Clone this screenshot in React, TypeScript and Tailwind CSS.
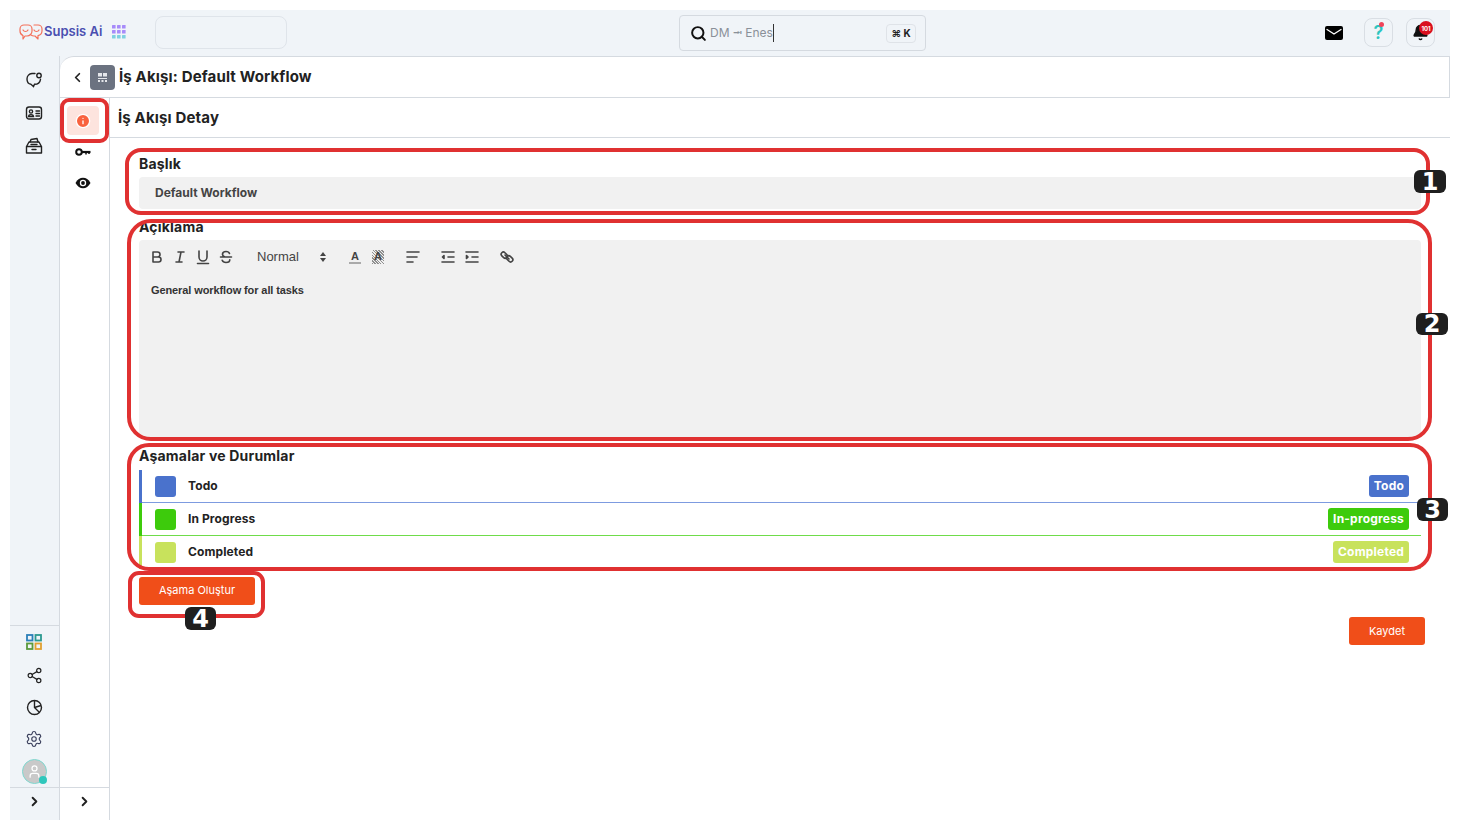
import React from 'react';
import { ChevronLeft, ChevronRight, Search, Info, Settings, Share2, Bell, User } from 'lucide-react';

const stages = [
  { name: 'Todo', tag: 'Todo', bar: 'border-l-[#4a72cc]', line: 'bg-[#7d9be0]', bg: 'bg-[#4a72cc]' },
  { name: 'In Progress', tag: 'In-progress', bar: 'border-l-[#3dcb0c]', line: 'bg-[#6fdc4a]', bg: 'bg-[#3dcb0c]' },
  { name: 'Completed', tag: 'Completed', bar: 'border-l-[#c8e25c]', line: 'bg-[#c8e25c]', bg: 'bg-[#c8e25c]' },
];

const Logo = () => (
  <svg width="24" height="18" viewBox="0 0 24 18" fill="none" stroke="#f4705a" strokeWidth="1.2" strokeLinecap="round" strokeLinejoin="round">
    <path d="M5 2h4a4 4 0 0 1 4 4v2a5 5 0 0 1-5 5H6l-2 3v-3.4A5 5 0 0 1 1 8V6a4 4 0 0 1 4-4z" />
    <path d="M15 2h4a4 4 0 0 1 4 4v2a5 5 0 0 1-4 4.6V16l-3-3h-1a5 5 0 0 1-3-1" />
    <path d="M4 7c1 2 4 2 5 0M15 7c1 2 4 2 5 0" />
  </svg>
);

const Apps = () => (
  <svg width="14" height="14" viewBox="0 0 14 14">
    {[0, 5, 10].map((y, r) =>
      [0, 5, 10].map((x) => (
        <rect key={`${x}-${y}`} x={x} y={y} width="3.6" height="3.6" rx="0.5" fill={r === 2 ? '#7fd0e0' : '#a78bfa'} />
      ))
    )}
  </svg>
);

const MailIcon = () => (
  <svg width="18" height="14" viewBox="0 0 18 14">
    <rect width="18" height="14" rx="2" fill="#000" />
    <path d="M2 3.500 9 8l7-4.500" fill="none" stroke="#fff" strokeWidth="1.300" strokeLinecap="round" />
  </svg>
);

const ChatIcon = () => (
  <svg width="18" height="18" viewBox="0 0 18 18" fill="none" stroke="#222" strokeWidth="1.400" strokeLinecap="round">
    <path d="M10 2.500H7a5.500 5.500 0 0 0-5 5.500c0 3 2 5 4 5.300l2.500 2.200 1-2.200c3 0 5.500-1.800 6-5" />
    <circle cx="14" cy="4.500" r="2.200" />
  </svg>
);

const ContactIcon = () => (
  <svg width="18" height="16" viewBox="0 0 18 16" fill="none" stroke="#222" strokeWidth="1.400" strokeLinecap="round">
    <rect x="1.500" y="2" width="15" height="12" rx="2.500" />
    <circle cx="6" cy="6.500" r="1.600" />
    <path d="M3.500 11.500c.3-2.500 4.700-2.500 5 0zM11 6h3.500M11 8.500h3.500M11 11h3.500" />
  </svg>
);

const InboxIcon = () => (
  <svg width="18" height="18" viewBox="0 0 18 18" fill="none" stroke="#222" strokeWidth="1.400" strokeLinejoin="round" strokeLinecap="round">
    <path d="M1.500 9.500 4 5h10l2.500 4.500V16h-15zM1.500 9.500h15M7 12.500h4" />
    <path d="M5 5l1-2.500 6-1 1 3.500M6 7.500h6" />
  </svg>
);

const GridIcon = () => (
  <svg width="16" height="16" viewBox="0 0 16 16" fill="none" strokeWidth="1.800">
    <rect x="1" y="1" width="5.500" height="5.500" stroke="#2b7fb8" />
    <rect x="9.500" y="1" width="5.500" height="5.500" stroke="#2c9a8f" />
    <rect x="1" y="9.500" width="5.500" height="5.500" stroke="#5a9a3c" />
    <rect x="9.500" y="9.500" width="5.500" height="5.500" stroke="#e0a030" />
  </svg>
);

const PieIcon = () => (
  <svg width="17" height="17" viewBox="0 0 17 17" fill="none" stroke="#222" strokeWidth="1.400" strokeLinejoin="round">
    <circle cx="8.500" cy="8.500" r="7" />
    <path d="M8.500 1.500v7l5 5M8.500 8.500l6.500-2" />
  </svg>
);

const KeyIcon = () => (
  <svg width="16" height="10" viewBox="0 0 16 10" fill="none" stroke="#111">
    <circle cx="4" cy="5" r="2.800" strokeWidth="2" />
    <path d="M7 5h8.500" strokeWidth="2.200" />
    <path d="M11 5v2.500M14 5v2" strokeWidth="1.500" />
  </svg>
);

const EyeIcon = () => (
  <svg width="16" height="12" viewBox="0 0 16 12">
    <path d="M0.500 6C2.500 2.300 5 .8 8 .8s5.500 1.500 7.500 5.200c-2 3.700-4.500 5.200-7.500 5.200S2.500 9.700.500 6z" fill="#111" />
    <circle cx="8" cy="6" r="3.200" fill="#fff" />
    <circle cx="8" cy="6" r="1.900" fill="#111" />
  </svg>
);

const FlowGlyph = () => (
  <svg width="11" height="11" viewBox="0 0 11 11" fill="#e5e7eb">
    <path d="M1 1h4v3.500H1zM6 1h4v3.500H6z" />
    <path d="M1 6h9v1H1zM1 8h2v2H1zM4.500 8h2v2h-2zM8 8h2v2H8z" />
  </svg>
);

// editor toolbar glyphs, 18 unit grid
const Tool = ({ className, children }: { className?: string; children: React.ReactNode }) => (
  <svg width="18" height="18" viewBox="0 0 18 18" fill="none" stroke="#444" strokeWidth="1.600" strokeLinecap="round" strokeLinejoin="round" className={className}>
    {children}
  </svg>
);

const ColorA = ({ hatch }: { hatch?: boolean }) => (
  <span className={`flex justify-center w-[12px] h-[14px] text-[11px] leading-[12px] font-bold text-[#444] ${hatch ? 'bg-[repeating-linear-gradient(45deg,#8f8f8f_0,#8f8f8f_1px,#efefef_1px,#efefef_2px)]' : 'border-b-2 border-b-[#aaa]'}`}>A</span>
);

const Label = ({ children }: { children: React.ReactNode }) => (
  <div className="text-[14px] leading-[20px] font-bold tracking-[0.2px] text-[#222]">{children}</div>
);

const Badge = ({ className, children }: { className: string; children: React.ReactNode }) => (
  <div className={`absolute flex items-center justify-center rounded-[6px] bg-[#1f1f1f] text-white text-[24px] font-bold font-['DejaVu_Sans',sans-serif] ${className}`}>{children}</div>
);

const Ring = ({ className }: { className: string }) => (
  <div className={`absolute border-4 border-[#e03131] ${className}`} />
);

export default function App() {
  return (
    <div className="relative w-[1460px] h-[830px] overflow-hidden bg-white p-[10px] font-['Inter',sans-serif] text-[#222]">
      <div className="flex flex-col h-[810px] bg-[#f0f4f8]">
        {/* top bar */}
        <header className="flex items-center h-[46px] shrink-0">
          <div className="flex items-center w-[145px] pl-[9px] pb-[3px]">
            <Logo />
            <span className="ml-px text-[13px] font-semibold text-[#4a4fb0]">Supsis Ai</span>
            <span className="ml-[10px]"><Apps /></span>
          </div>
          <div className="w-[132px] h-[33px] -mt-[2px] rounded-lg border border-[#dfe4ea]" />
          <div className="ml-[392px] flex items-center w-[247px] h-[36px] rounded border border-[#d5dae0] pl-[10px] pr-[9px]">
            <Search size={17} strokeWidth={2.800} className="text-[#111]" />
            <span className="ml-[3px] text-[12px] text-[#8a9099] border-r border-r-[#333]">DM ⭲ Enes</span>
            <span className="ml-auto flex items-center justify-center w-[30px] h-[19px] rounded border border-[#dfe3e8] text-[10px] font-bold">⌘ K</span>
          </div>
          <div className="ml-auto flex items-center pr-[15px] pb-[1px]">
            <MailIcon />
            <div className="relative ml-[21px] flex items-center justify-center w-[29px] h-[29px] rounded-lg border border-[#d9dee4] text-[18px] font-semibold text-[#2cc5c0]">
              ?
              <span className="absolute top-[3px] right-[8px] w-[5px] h-[5px] rounded-full bg-[#f0445a]" />
            </div>
            <div className="relative ml-[13px] flex items-center justify-center w-[29px] h-[29px] rounded-lg border border-[#d9dee4]">
              <Bell size={17} fill="#111" className="text-[#111]" />
              <span className="absolute top-[2px] right-[1px] flex items-center justify-center w-[14px] h-[14px] rounded-full bg-[#d90f1e] text-white text-[6px] font-bold">101</span>
            </div>
          </div>
        </header>

        <div className="flex flex-1 min-h-0">
          {/* icon rail */}
          <aside className="flex flex-col items-center w-[50px] shrink-0 border-r border-r-[#d5dae0]">
            <div className="flex flex-col items-center pt-[15px] pr-[1px]">
              <ChatIcon />
              <span className="mt-[16px]"><ContactIcon /></span>
              <span className="mt-[16px]"><InboxIcon /></span>
            </div>
            <div className="mt-auto w-full border-t border-t-[#d5dae0] flex flex-col items-center pt-[8px] pr-[1px]">
              <GridIcon />
              <Share2 size={17} strokeWidth={1.700} className="mt-[17px]" />
              <span className="mt-[15px]"><PieIcon /></span>
              <Settings size={18} strokeWidth={1.500} className="mt-[14px] text-[#3a3f5c]" />
              <div className="relative mt-[11px] flex items-center justify-center w-[25px] h-[25px] rounded-full bg-[#c9c9c9] border border-[#7fd8d0]">
                <User size={15} className="text-white" />
                <span className="absolute -right-[1px] -bottom-[1px] w-[8px] h-[8px] rounded-full bg-[#2fc7bc]" />
              </div>
            </div>
            <div className="w-full h-[33px] mt-[3px] pt-[6px] border-t border-t-[#d5dae0] flex justify-center">
              <ChevronRight size={15} strokeWidth={3} />
            </div>
          </aside>

          {/* main panel */}
          <main className="flex flex-col flex-1 min-w-0 bg-white rounded-tl-[14px]">
            <div className="flex items-center h-[42px] shrink-0 border-t border-b border-r border-[#d5dae0] rounded-tl-[14px] pl-[10px]">
              <ChevronLeft size={15} strokeWidth={2.800} />
              <span className="ml-[5px] flex items-center justify-center w-[25px] h-[25px] rounded bg-[#6b7280]">
                <FlowGlyph />
              </span>
              <h1 className="ml-[4px] text-[15px] font-bold tracking-[0.15px] text-[#222]">İş Akışı: Default Workflow</h1>
            </div>
            <div className="flex flex-1 min-h-0">
              {/* section tabs */}
              <nav className="flex flex-col w-[50px] shrink-0 border-r border-r-[#d5dae0]">
                <div className="flex flex-col items-center flex-1 pt-[8px] pr-[3px]">
                  <div className="flex items-center justify-center w-[32px] h-[29px] rounded bg-[#fde4de]">
                    <Info size={16} fill="#f9623e" stroke="#fff" />
                  </div>
                  <span className="mt-[12px]"><KeyIcon /></span>
                  <span className="mt-[20px]"><EyeIcon /></span>
                </div>
                <div className="h-[33px] pt-[6px] border-t border-t-[#d5dae0] flex justify-center">
                  <ChevronRight size={15} strokeWidth={3} />
                </div>
              </nav>

              {/* form */}
              <section className="flex-1 min-w-0">
                <div className="flex items-center h-[40px] pl-[8px] pt-[1px] border-b border-b-[#d5dae0]">
                  <h2 className="text-[15px] font-bold tracking-[0.15px] text-[#222]">İş Akışı Detay</h2>
                </div>
                <div className="pl-[29px] pr-[29px] pt-[16px]">
                  <Label>Başlık</Label>
                  <div className="mt-[3px] flex items-center h-[32px] rounded bg-[#f1f1f1] pl-[16px] text-[12px] font-bold text-[#444]">Default Workflow</div>

                  <div className="mt-[8px]"><Label>Açıklama</Label></div>
                  <div className="h-[197px] mt-[3px] rounded bg-[#f1f1f1]">
                    <div className="flex items-center h-[34px] pl-[9px] text-[#444] font-['Liberation_Sans',sans-serif]">
                      <Tool>
                        <path d="M5 4h4.500a2.500 2.500 0 0 1 0 5H5zM5 9h5.500a2.500 2.500 0 0 1 0 5H5z" />
                      </Tool>
                      <Tool className="ml-[5px]">
                        <path d="M7 4h6M5 14h6M8 14l2-10" />
                      </Tool>
                      <Tool className="ml-[5px]">
                        <path d="M5 3v6a4 4 0 0 0 8 0V3M3.500 15.500h11" />
                      </Tool>
                      <Tool className="ml-[5px]">
                        <path d="M3.500 9h11M12.500 5.500C12 4 10.500 3.500 9 3.500c-2 0-3.500 1-3.500 2.700 0 1.200.8 2 2 2.500M12.800 11.800c0 1.800-1.700 2.700-3.800 2.700-1.700 0-3.200-.6-3.800-2.200" />
                      </Tool>
                      <span className="ml-[22px] w-[60px] text-[13px]">Normal</span>
                      <svg width="12" height="12" viewBox="0 0 12 12" fill="#444">
                        <path d="M6 1 9 5H3zM6 11 3 7h6z" />
                      </svg>
                      <span className="ml-[17px] w-[18px] flex justify-center"><ColorA /></span>
                      <span className="ml-[5px] w-[18px] flex justify-center"><ColorA hatch /></span>
                      <Tool className="ml-[17px]">
                        <path d="M3 4h12M3 9h10M3 14h6" />
                      </Tool>
                      <Tool className="ml-[17px]">
                        <path d="M3 4h12M9 9h6M3 14h12M5 7.500 3.500 9 5 10.500z" />
                      </Tool>
                      <Tool className="ml-[6px]">
                        <path d="M3 4h12M9 9h6M3 14h12M3.500 7.500 5 9l-1.500 1.500z" />
                      </Tool>
                      <Tool className="ml-[17px]">
                        <path d="M7 7l4 4" />
                        <rect x="2.800" y="5" width="7" height="4.400" rx="2.200" transform="rotate(45 6.300 7.200)" />
                        <rect x="8.200" y="8.600" width="7" height="4.400" rx="2.200" transform="rotate(45 11.700 10.800)" />
                      </Tool>
                    </div>
                    <p className="pt-[10px] pl-[12px] text-[11px] leading-[13px] tracking-[-0.1px] font-bold text-[#333] font-['Liberation_Sans',sans-serif]">General workflow for all tasks</p>
                  </div>

                  <div className="mt-[9px]"><Label>Aşamalar ve Durumlar</Label></div>
                  <div className="mt-[4px] flex flex-col">
                    {stages.map((s) => (
                      <div key={s.name} className={`flex flex-col h-[33px] border-l-[3.500px] ${s.bar}`}>
                        <div className="flex items-center flex-1 pl-[13px] pr-[12px]">
                          <span className={`w-[21px] h-[21px] rounded-[3px] ${s.bg}`} />
                          <span className="ml-[12px] text-[12px] font-bold tracking-[0.1px] text-[#222]">{s.name}</span>
                          <span className={`ml-auto flex items-center h-[22px] px-[5px] rounded-[3px] text-white text-[12px] font-bold tracking-[0.2px] ${s.bg}`}>{s.tag}</span>
                        </div>
                        <div className={`h-px ${s.line}`} />
                      </div>
                    ))}
                  </div>
                  <button className="mt-[8px] flex items-center justify-center w-[116px] h-[28px] pb-[2px] rounded-[3px] bg-[#f04e19] text-white text-[11px]">Aşama Oluştur</button>
                  <div className="flex justify-end mt-[12px] -mr-[4px]">
                    <button className="flex items-center justify-center w-[76px] h-[28px] rounded-[3px] bg-[#f04e19] text-white text-[11px]">Kaydet</button>
                  </div>
                </div>
              </section>
            </div>
          </main>
        </div>
      </div>

      {/* red annotations drawn over the screen */}
      <Ring className="left-[60px] top-[98px] w-[49px] h-[45px] rounded-[9px]" />
      <Ring className="left-[125px] top-[148px] w-[1305px] h-[67px] rounded-[16px]" />
      <Ring className="left-[127px] top-[219px] w-[1305px] h-[222px] rounded-[24px]" />
      <Ring className="left-[127px] top-[443px] w-[1305px] h-[128px] rounded-[22px]" />
      <Ring className="left-[128px] top-[571px] w-[137px] h-[47px] rounded-[11px]" />
      <Badge className="left-[1414px] top-[170px] w-[32px] h-[23px]">1</Badge>
      <Badge className="left-[1416px] top-[313px] w-[32px] h-[22px]">2</Badge>
      <Badge className="left-[1417px] top-[498px] w-[31px] h-[23px]">3</Badge>
      <Badge className="left-[185px] top-[607px] w-[31px] h-[23px]">4</Badge>
    </div>
  );
}
